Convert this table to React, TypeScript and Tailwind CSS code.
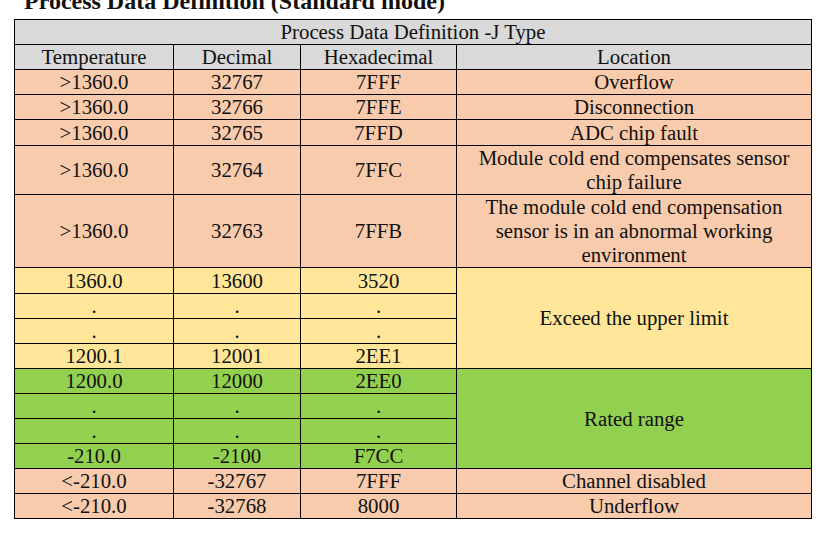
import React from "react";

const S = "bg-[#f8cbad]";
const Y = "bg-[#ffe699]";
const G = "bg-[#92d050]";
const H = "bg-[#d9d9d9]";

const td = "border border-black p-0 text-center align-middle leading-[24px]";
const tdPad = "border border-black p-0 pt-[1px] text-center align-middle leading-[24px]";

type Row = { t: string; d: string; h: string; loc?: React.ReactNode; span?: number; bg: string; skipLoc?: boolean; pad?: boolean };

const rows: Row[] = [
  { t: ">1360.0", d: "32767", h: "7FFF", loc: "Overflow", bg: S },
  { t: ">1360.0", d: "32766", h: "7FFE", loc: "Disconnection", bg: S },
  { t: ">1360.0", d: "32765", h: "7FFD", loc: "ADC chip fault", bg: S, pad: true },
  {
    t: ">1360.0",
    d: "32764",
    h: "7FFC",
    loc: (
      <>
        Module cold end compensates sensor
        <br />
        chip failure
      </>
    ),
    bg: S,
  },
  {
    t: ">1360.0",
    d: "32763",
    h: "7FFB",
    loc: (
      <>
        The module cold end compensation
        <br />
        sensor is in an abnormal working
        <br />
        environment
      </>
    ),
    bg: S,
  },
  { t: "1360.0", d: "13600", h: "3520", loc: "Exceed the upper limit", span: 4, bg: Y, pad: true },
  { t: ".", d: ".", h: ".", bg: Y, skipLoc: true },
  { t: ".", d: ".", h: ".", bg: Y, skipLoc: true },
  { t: "1200.1", d: "12001", h: "2EE1", bg: Y, skipLoc: true },
  { t: "1200.0", d: "12000", h: "2EE0", loc: "Rated range", span: 4, bg: G },
  { t: ".", d: ".", h: ".", bg: G, skipLoc: true },
  { t: ".", d: ".", h: ".", bg: G, skipLoc: true },
  { t: "-210.0", d: "-2100", h: "F7CC", bg: G, skipLoc: true },
  { t: "<-210.0", d: "-32767", h: "7FFF", loc: "Channel disabled", bg: S },
  { t: "<-210.0", d: "-32768", h: "8000", loc: "Underflow", bg: S },
];

export default function App() {
  return (
    <div className="w-[825px] h-[536px] overflow-hidden bg-white text-[#111]" style={{ fontFamily: '"Liberation Serif", "Times New Roman", serif' }}>
      <div className="-mt-[11px] pl-[24px] text-[24px] leading-[24px] font-bold">
        Process Data Definition (Standard mode)
      </div>
      <table className="mt-[6px] ml-[14px] w-[797px] table-fixed border-collapse text-[20.8px]">
        <colgroup>
          <col className="w-[159px]" />
          <col className="w-[127px]" />
          <col className="w-[156px]" />
          <col className="w-[355px]" />
        </colgroup>
        <tbody>
          <tr className={H}>
            <td className={td} colSpan={4}>
              Process Data Definition -J Type
            </td>
          </tr>
          <tr className={H}>
            <td className={td}>Temperature</td>
            <td className={td}>Decimal</td>
            <td className={td}>Hexadecimal</td>
            <td className={td}>Location</td>
          </tr>
          {rows.map((r, i) => (
            <tr key={i} className={r.bg}>
              <td className={r.pad ? tdPad : td}>{r.t}</td>
              <td className={r.pad ? tdPad : td}>{r.d}</td>
              <td className={r.pad ? tdPad : td}>{r.h}</td>
              {!r.skipLoc && (
                <td className={r.pad && !r.span ? tdPad : td} rowSpan={r.span ?? 1}>
                  {r.loc}
                </td>
              )}
            </tr>
          ))}
        </tbody>
      </table>
    </div>
  );
}
